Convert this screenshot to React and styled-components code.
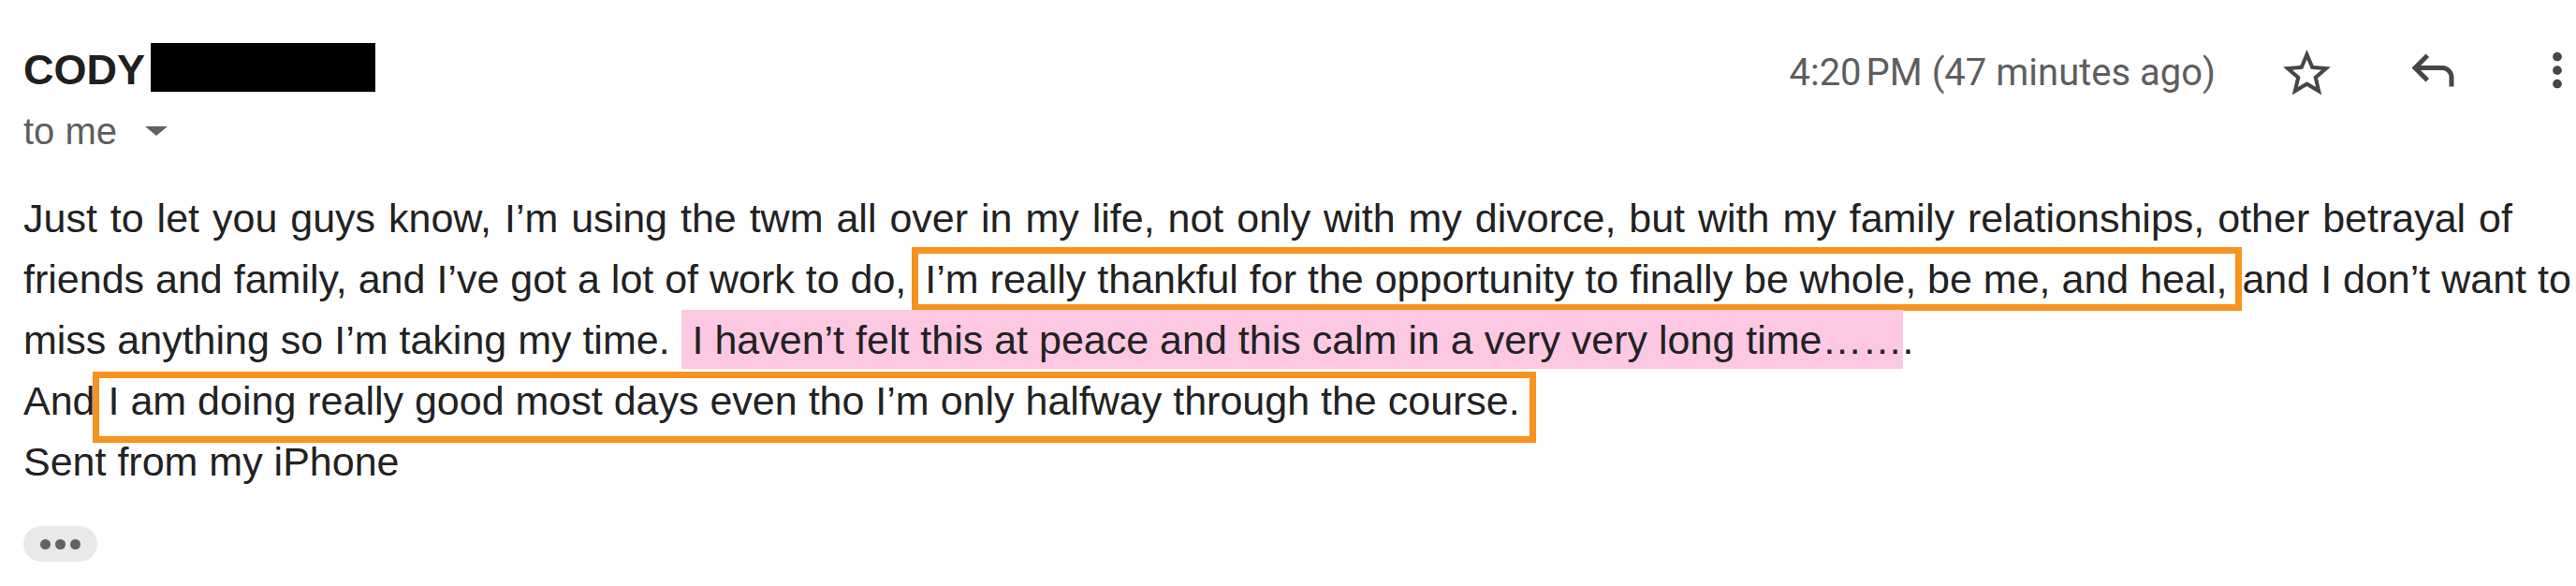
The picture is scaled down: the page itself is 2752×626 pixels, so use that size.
import React from 'react';
import styled, { createGlobalStyle } from 'styled-components';

const GlobalStyle = createGlobalStyle`
  html, body {
    margin: 0;
    padding: 0;
    background: #ffffff;
    overflow: hidden;
  }
`

const MessageDiv = styled.div`
  width: 2752px;
  height: 626px;
  box-sizing: border-box;
  padding: 45px 0 0 25px;
  background: #ffffff;
  font-family: "Liberation Sans", Arial, sans-serif;
  color: #222222;
`

const HeaderRow = styled.div`
  display: flex;
  align-items: center;
  justify-content: space-between;
  height: 60px;
`

const SenderDiv = styled.div`
  display: flex;
  align-items: flex-start;
  height: 60px;
`

const SenderName = styled.span`
  font-weight: 700;
  font-size: 45px;
  line-height: 60px;
  color: #1f1f1f;
`

const Redaction = styled.div`
  width: 240px;
  height: 52px;
  margin: 1px 0 0 6px;
  background: #000000;
`

const ActionsDiv = styled.div`
  display: flex;
  align-items: center;
  margin-right: -9px;
`

const TimeStamp = styled.span`
  font-family: Roboto, "Liberation Sans", sans-serif;
  font-size: 40px;
  line-height: 60px;
  padding-top: 6px;
  margin-right: 67px;
  color: #5e5e5e;
`

const IconButton = styled.div`
  display: flex;
  align-items: center;
  justify-content: center;
  width: ${p => p.$size}px;
  height: 60px;
  margin-left: ${p => p.$gap || 0}px;
  margin-top: ${p => p.$dy || 0}px;
  color: #444746;

  svg {
    width: ${p => p.$size}px;
    height: ${p => p.$size}px;
    fill: currentColor;
    flex-shrink: 0;
  }
`

const RecipientRow = styled.div`
  display: flex;
  align-items: center;
  height: 60px;
  margin-top: 5px;
  font-size: 40px;
  line-height: 60px;
  color: #5e5e5e;
`

const Caret = styled.span`
  width: 0;
  height: 0;
  margin-left: 30px;
  border-left: 12px solid transparent;
  border-right: 12px solid transparent;
  border-top: 10px solid #5f6368;
`

const BodyText = styled.div`
  margin-top: 31px;
  font-size: 43px;
  line-height: 65px;
  white-space: nowrap;
  color: #222222;
`

const Line = styled.span`
  word-spacing: ${p => p.$spread || 0}px;
`

const Outlined = styled.span`
  border: ${p => p.$bw}px solid #f7931e;
  padding: ${p => p.$pad};
  margin-left: ${p => p.$ml || 0}px;
`

const Highlight = styled.span`
  background: #fcc8e2;
  padding: 8px 0 7px;
`

const MoreButton = styled.div`
  display: flex;
  align-items: center;
  justify-content: center;
  gap: 5px;
  width: 79px;
  height: 38px;
  margin-top: 36px;
  border-radius: 19px;
  background: #e9e9e9;
`

const Dot = styled.span`
  width: 11px;
  height: 11px;
  border-radius: 50%;
  background: #5f6368;
`

const StarIcon = () => (
  <svg viewBox="0 0 24 24">
    <path d="M22 9.24l-7.19-.62L12 2 9.19 8.63 2 9.24l5.46 4.73L5.82 21 12 17.27 18.18 21l-1.63-7.03L22 9.24zM12 15.4l-3.76 2.27 1-4.28-3.32-2.88 4.38-.38L12 6.1l1.71 4.04 4.38.38-3.32 2.88 1 4.28L12 15.4z" />
  </svg>
)

const ReplyIcon = () => (
  <svg viewBox="0 -960 960 960">
    <path d="M760-200v-160q0-50-35-85t-85-35H273l144 144-57 56-240-240 240-240 57 56-144 144h367q83 0 141.5 58.5T840-360v160h-80Z" />
  </svg>
)

const MoreVertIcon = () => (
  <svg viewBox="0 0 24 24">
    <path d="M12 8c1.1 0 2-.9 2-2s-.9-2-2-2-2 .9-2 2 .9 2 2 2zm0 2c-1.1 0-2 .9-2 2s.9 2 2 2 2-.9 2-2-.9-2-2-2zm0 6c-1.1 0-2 .9-2 2s.9 2 2 2 2-.9 2-2-.9-2-2-2z" />
  </svg>
)

class App extends React.Component {
  render() {
    return (
      <MessageDiv>
        <GlobalStyle />
        <HeaderRow>
          <SenderDiv>
            <SenderName>CODY</SenderName>
            <Redaction />
          </SenderDiv>
          <ActionsDiv>
            <TimeStamp>4:20{'\u202f'}PM (47 minutes ago)</TimeStamp>
            <IconButton $size={61} $dy={7}><StarIcon /></IconButton>
            <IconButton $size={60} $gap={74}><ReplyIcon /></IconButton>
            <IconButton $size={58} $gap={74}><MoreVertIcon /></IconButton>
          </ActionsDiv>
        </HeaderRow>
        <RecipientRow>
          <span>to me</span>
          <Caret />
        </RecipientRow>
        <BodyText>
          <Line $spread={2}>Just to let you guys know, I’m using the twm all over in my life, not only with my divorce, but with my family relationships, other betrayal of</Line>
          <br />
          friends and family, and I’ve got a lot of work to do,<Outlined $bw={7} $pad="3px 9px 3px 7px" $ml={6}>I’m really thankful for the opportunity to finally be whole, be me, and heal,</Outlined>and I don’t want to
          <br />
          miss anything so I’m taking my time. <Highlight>{'\u00a0'}I haven’t felt this at peace and this calm in a very very long time……</Highlight>.
          <br />
          And<Outlined $bw={7} $pad="0 10px 14px 10px" $ml={-3}>I am doing really good most days even tho I’m only halfway through the course.</Outlined>
          <br />
          Sent from my iPhone
        </BodyText>
        <MoreButton>
          <Dot />
          <Dot />
          <Dot />
        </MoreButton>
      </MessageDiv>
    )
  }
}

export default App;
